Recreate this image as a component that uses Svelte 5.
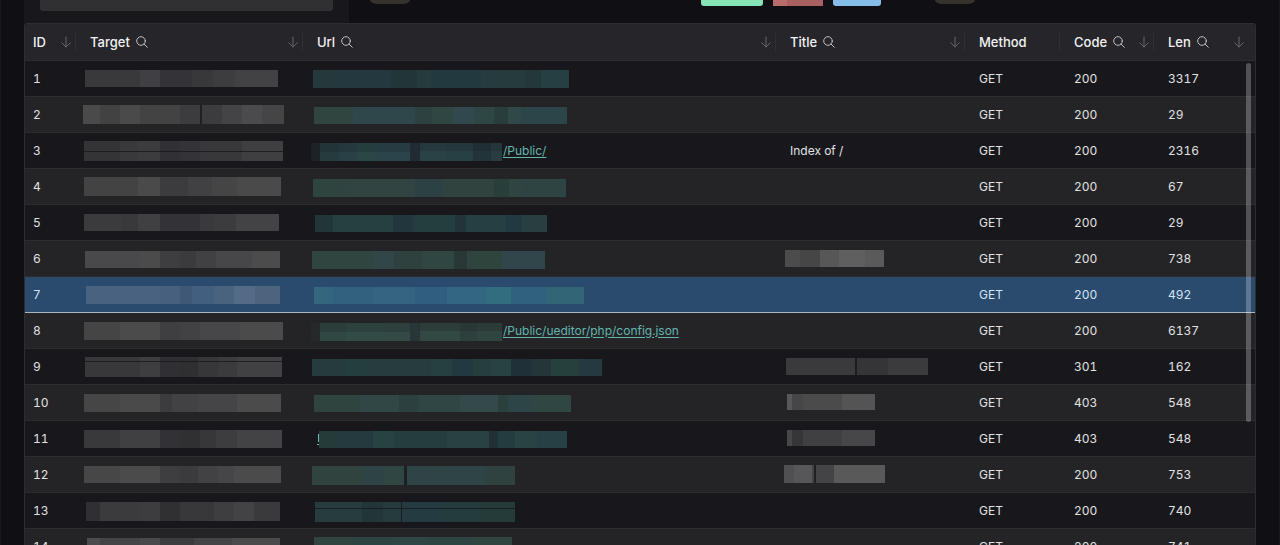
<script lang="ts">
    // a mosaic strip: left, top, height, then [right edge, colour] of each block
    type Strip = { x: number, y: number, h: number, blocks: [number, string][], cuts?: number[][] };

    const columns = [
        { key: "id", label: "ID", search: false, sort: true },
        { key: "target", label: "Target", search: true, sort: true },
        { key: "url", label: "Url", search: true, sort: true },
        { key: "title", label: "Title", search: true, sort: true },
        { key: "method", label: "Method", search: false, sort: false },
        { key: "code", label: "Code", search: true, sort: true },
        { key: "len", label: "Len", search: true, sort: true },
    ];

    const s = (x: number, y: number, h: number, blocks: [number, string][], cuts: number[][] = []): Strip => ({ x, y, h, blocks, cuts });

    const rows: { id: number, target: Strip, url: Strip, link?: string, title?: string, titleStrip?: Strip, code: number, len: number }[] = [
        {
            id: 1, code: 200, len: 3317,
            target: s(3, 9, 17, [[58, "#39393b"], [78, "#404044"], [110, "#343438"], [131, "#38383a"], [153, "#3d3d40"], [196, "#424245"]]),
            url: s(4, 9, 18, [[28, "#25393d"], [82, "#23383f"], [108, "#223639"], [122, "#253b3c"], [172, "#223940"], [216, "#253b3d"], [232, "#243739"], [260, "#263f43"]]),
        },
        {
            id: 2, code: 200, len: 29,
            target: s(1, 8, 19, [[18, "#4a4a4b"], [38, "#424243"], [58, "#4a4a4b"], [98, "#434344"], [140, "#3c3c3e"], [160, "#444446"], [180, "#4b4b4d"], [202, "#454546"]], [[118, 8, 2, 19]]),
            url: s(5, 10, 17, [[44, "#30453f"], [106, "#2f464a"], [123, "#2c4140"], [144, "#304643"], [165, "#31494e"], [185, "#2f4744"], [199, "#293e3c"], [212, "#314946"], [258, "#2c4548"]]),
        },
        {
            id: 3, code: 200, len: 2316, link: "/Public/", title: "Index of /",
            target: s(2, 8, 20, [[38, "#343437"], [56, "#39393c"], [78, "#3c3c3e"], [98, "#303035"], [118, "#343438"], [160, "#38383b"], [201, "#3f3f41"]], [[2, 18, 199, 1]]),
            url: s(2, 10, 18, [[11, "#1d2226"], [30, "#263b3d"], [48, "#294047"], [68, "#2a4745"], [101, "#2b444b"], [111, "#202b34"], [136, "#2a4145"], [164, "#274044"], [182, "#22343a"], [193, "#293d40"]], [[11, 10, 90, 9], [110, 10, 83, 8]]),
        },
        {
            id: 4, code: 200, len: 67,
            target: s(2, 8, 19, [[56, "#434344"], [78, "#4a4a4b"], [106, "#3c3c3e"], [130, "#414143"], [155, "#454546"], [199, "#4a4a4b"]]),
            url: s(4, 10, 18, [[36, "#30443f"], [106, "#314442"], [134, "#2c4143"], [185, "#30433f"], [200, "#283e3b"], [214, "#304441"], [257, "#2d4443"]]),
        },
        {
            id: 5, code: 200, len: 29,
            target: s(2, 9, 17, [[40, "#3b3b3d"], [56, "#39393b"], [78, "#404042"], [118, "#323237"], [132, "#3a3a3c"], [154, "#3c3c3f"], [197, "#434345"]]),
            url: s(6, 10, 17, [[24, "#223538"], [84, "#264040"], [104, "#22363d"], [146, "#243e3f"], [157, "#22343a"], [197, "#253f43"], [213, "#233942"], [238, "#293e41"]]),
        },
        {
            id: 6, code: 200, len: 738,
            target: s(3, 10, 17, [[58, "#49494b"], [78, "#4b4b4c"], [98, "#3e3e40"], [114, "#3b3b3e"], [134, "#414143"], [170, "#47474a"], [198, "#4c4c4d"]]),
            url: s(3, 10, 18, [[64, "#30453f"], [85, "#314747"], [113, "#2e413f"], [145, "#304642"], [158, "#293837"], [193, "#30443e"], [236, "#31464a"]]),
            titleStrip: s(3, 9, 17, [[18, "#4c4c4d"], [38, "#464647"], [57, "#575758"], [83, "#5f5f60"], [102, "#5a5a5b"]]),
        },
        {
            id: 7, code: 200, len: 492,
            target: s(4, 9, 18, [[78, "#49627f"], [98, "#46607d"], [110, "#3f5876"], [132, "#425f80"], [152, "#49627d"], [173, "#536b87"], [198, "#4d647f"]]),
            url: s(5, 10, 17, [[24, "#34677d"], [64, "#31617f"], [106, "#346480"], [138, "#305e81"], [177, "#326681"], [202, "#326c7f"], [238, "#30617f"], [275, "#326677"]]),
        },
        {
            id: 8, code: 200, len: 6137, link: "/Public/ueditor/php/config.json",
            target: s(2, 9, 18, [[38, "#454546"], [78, "#4b4b4c"], [98, "#3f3f41"], [118, "#424244"], [158, "#47474a"], [201, "#4b4b4c"]]),
            url: s(2, 10, 18, [[11, "#252a29"], [38, "#304843"], [75, "#324b47"], [101, "#334a46"], [111, "#283637"], [151, "#324842"], [168, "#2d403d"], [193, "#30453f"]], [[11, 10, 90, 9], [110, 10, 83, 8]]),
        },
        {
            id: 9, code: 301, len: 162,
            target: s(3, 8, 20, [[58, "#38383b"], [78, "#3e3e40"], [98, "#303034"], [116, "#2f2f31"], [136, "#37373a"], [155, "#3b3b3d"], [200, "#414143"]], [[3, 12, 197, 1]]),
            url: s(3, 10, 17, [[38, "#263b3d"], [62, "#243e40"], [122, "#263c3f"], [143, "#263f41"], [164, "#233941"], [182, "#263e3d"], [202, "#274241"], [222, "#203039"], [242, "#25363a"], [270, "#26403d"], [293, "#253a40"]]),
            titleStrip: s(4, 9, 17, [[73, "#3a3a3c"], [106, "#353538"], [146, "#3b3b3e"]], [[73, 9, 2, 17]]),
        },
        {
            id: 10, code: 403, len: 548,
            target: s(2, 9, 18, [[38, "#464647"], [78, "#4a4a4b"], [90, "#3c3c3e"], [116, "#424244"], [155, "#454547"], [199, "#4b4b4c"]]),
            url: s(5, 10, 17, [[51, "#2f443f"], [90, "#304746"], [110, "#2c403f"], [151, "#304644"], [189, "#33494a"], [199, "#2b403d"], [222, "#2d4546"], [262, "#304642"]]),
            titleStrip: s(5, 9, 16, [[10, "#58585a"], [21, "#464648"], [60, "#4b4b4c"], [93, "#545455"]]),
        },
        {
            id: 11, code: 403, len: 548,
            target: s(2, 9, 18, [[38, "#39393c"], [78, "#404042"], [98, "#323236"], [118, "#303032"], [134, "#37373a"], [155, "#3d3d3f"], [200, "#434345"]]),
            url: s(10, 10, 17, [[29, "#253b3a"], [64, "#253a3f"], [85, "#264241"], [138, "#253d3d"], [180, "#294141"], [189, "#223033"], [206, "#243c40"], [228, "#294343"], [258, "#274045"]]),
            titleStrip: s(5, 9, 16, [[10, "#47474a"], [21, "#363638"], [60, "#404042"], [93, "#474749"]]),
        },
        {
            id: 12, code: 200, len: 753,
            target: s(2, 9, 17, [[38, "#474748"], [78, "#4b4b4c"], [98, "#3e3e40"], [116, "#3b3b3d"], [136, "#424244"], [152, "#464648"], [199, "#4b4b4c"]]),
            url: s(3, 9, 19, [[54, "#30433f"], [75, "#2e4346"], [95, "#304643"], [132, "#304445"], [175, "#2e4446"], [206, "#304240"]], [[95, 9, 3, 19]]),
            titleStrip: s(2, 8, 18, [[12, "#505051"], [30, "#57575a"], [52, "#444446"], [103, "#59595a"]], [[32, 8, 2, 18]]),
        },
        {
            id: 13, code: 200, len: 740,
            target: s(4, 9, 19, [[18, "#303032"], [58, "#3b3b3d"], [78, "#3d3d40"], [98, "#303033"], [132, "#38383b"], [152, "#3e3e41"], [172, "#434346"], [198, "#3a3a3d"]]),
            url: s(6, 9, 20, [[53, "#263c3e"], [74, "#22363a"], [92, "#253b3d"], [134, "#243b42"], [169, "#253c3f"], [206, "#253b3a"]], [[6, 15, 200, 1], [92, 9, 1, 20]]),
        },
        {
            id: 14, code: 200, len: 741,
            target: s(5, 9, 19, [[18, "#4c4c4e"], [58, "#444446"], [78, "#49494b"], [112, "#3c3c3e"], [150, "#444446"], [198, "#4b4b4c"]]),
            url: s(5, 8, 19, [[44, "#30453f"], [84, "#2d4444"], [120, "#304646"], [160, "#2d4442"], [203, "#30453f"]]),
        },
    ];

    let selected = $state(7);
</script>

{#snippet mosaic(strip: Strip, width: number)}
    <svg class="mosaic" {width} height="35" aria-hidden="true">
        {#each strip.blocks as [end, fill], i}
            {@const start = i ? strip.blocks[i - 1][0] : strip.x}
            <rect x={start} y={strip.y} width={end - start} height={strip.h} {fill} />
        {/each}
        {#each strip.cuts ?? [] as [x, y, w, h]}
            <rect {x} {y} width={w} height={h} fill="#18181c" opacity={h > 2 && w > 3 ? 0.2 : 0.8} />
        {/each}
        {#if strip.x === 10}
            <!-- first letter of the address sticks out left of the strip -->
            <path d="M9.500 13V21M8 23.500H10" stroke="#6fbab5" fill="none" />
        {/if}
    </svg>
{/snippet}

<div class="page">
    <div class="toolbar">
        <div class="panel">
            <input type="text" aria-label="Filter" />
        </div>
        <span class="pill first"></span>
        <div class="tags">
            <span class="tag green"></span>
            <span class="tag red"></span>
            <span class="tag blue"></span>
        </div>
        <span class="pill"></span>
    </div>

    <div class="table-wrap">
        <table>
            <colgroup>
                {#each columns as col}
                    <col class="col-{col.key}" />
                {/each}
            </colgroup>
            <thead>
                <tr>
                    {#each columns as col}
                        <th scope="col">
                            <div class="head">
                                <span>{col.label}</span>
                                {#if col.search}
                                    <button class="icon" aria-label="Search {col.label}">
                                        <svg width="12" height="12" viewBox="0 0 12 12" fill="none" stroke="#c0c0c2" stroke-linecap="round">
                                            <circle cx="5" cy="5" r="4.300" />
                                            <path d="M8.100 8.100L11.300 11.300" />
                                        </svg>
                                    </button>
                                {/if}
                                {#if col.sort}
                                    <button class="icon sort" aria-label="Sort by {col.label}">
                                        <svg width="10" height="12" viewBox="0 0 10 12" fill="none" stroke="#66666a" stroke-linecap="round" stroke-linejoin="round">
                                            <path d="M5 1V11M0.800 6.800L5 11L9.200 6.800" />
                                        </svg>
                                    </button>
                                {/if}
                            </div>
                        </th>
                    {/each}
                </tr>
            </thead>
            <tbody>
                {#each rows as row}
                    <tr class:selected={row.id === selected} class:striped={row.id % 2 === 0} onclick={() => selected = row.id}>
                        <td>{row.id}</td>
                        <td class="flush">{@render mosaic(row.target, 206)}</td>
                        <td class="flush">
                            <div class="address">
                                {#if row.link}
                                    {@render mosaic(row.url, 194)}<a href={row.link}>{row.link}</a>
                                {:else}
                                    {@render mosaic(row.url, 300)}
                                {/if}
                            </div>
                        </td>
                        {#if row.titleStrip}
                            <td class="flush">{@render mosaic(row.titleStrip, 160)}</td>
                        {:else}
                            <td>{row.title ?? ""}</td>
                        {/if}
                        <td>GET</td>
                        <td>{row.code}</td>
                        <td>{row.len}</td>
                    </tr>
                {/each}
            </tbody>
        </table>
        <div class="scrollbar"></div>
    </div>
</div>

<style>
    :global(body) {
        background-color: #101014;
    }
    .page {
        box-sizing: border-box;
        height: 100vh;
        padding: 0 23px;
        overflow: hidden;
        display: flex;
        flex-direction: column;
        border: solid #1a1a1d;
        border-width: 0 1px;
        font-family: Inter, "Liberation Sans", sans-serif;
        font-size: 12px;
        font-variant-numeric: tabular-nums;
        color: #e2e2e3;
    }

    .toolbar {
        flex: none;
        height: 23px;
        display: flex;
        align-items: flex-start;
    }
    .panel {
        box-sizing: border-box;
        width: 325px;
        height: 23px;
        padding: 0 16px;
        background-color: #18181c;
    }
    input {
        display: block;
        box-sizing: border-box;
        width: 100%;
        height: 11px;
        padding: 0 8px;
        border: none;
        border-radius: 0 0 3px 3px;
        background-color: #303033;
        color: inherit;
        font: inherit;
    }
    .pill {
        width: 40px;
        height: 4px;
        border-radius: 0 0 8px 8px / 0 0 4px 4px;
        background-color: #37322b;
    }
    .pill.first {
        margin-left: 21px;
    }
    .tags {
        display: flex;
        gap: 10px;
        margin: 0 54px 0 291px;
    }
    .tag {
        width: 48px;
        height: 6px;
        border-radius: 0 0 3px 3px;
    }
    .green {
        width: 62px;
        background-color: #86e3b6;
    }
    .red {
        width: 50px;
        border-radius: 0;
        background: linear-gradient(90deg, #b96c6c 28%, #a96060 28%);
    }
    .blue {
        background-color: #86bde8;
    }

    .table-wrap {
        position: relative;
        flex: 1;
        min-height: 0;
        overflow: hidden;
        border: 1px solid #2d2d30;
        border-bottom: none;
        border-radius: 3px 3px 0 0;
    }
    table {
        width: 100%;
        table-layout: fixed;
        border-collapse: separate;
        border-spacing: 0;
    }
    .col-id {
        width: 57px;
    }
    .col-target {
        width: 227px;
    }
    .col-title {
        width: 189px;
    }
    .col-method,
    .col-len {
        width: 95px;
    }
    .col-code {
        width: 94px;
    }

    th,
    td {
        box-sizing: border-box;
        height: 36px;
        padding: 0 8px;
        border-bottom: 1px solid #2d2d30;
        text-align: left;
        line-height: 18px;
        white-space: nowrap;
    }
    th {
        height: 37px;
        padding-right: 6px;
        background-color: #26262a;
        color: #f2f2f3;
        font-size: 13px;
        font-weight: 500;
    }
    td {
        background-color: #18181c;
    }
    .striped td {
        background-color: #242427;
    }
    .selected td {
        background-color: #2a4a6e;
        border-bottom-color: #aab4c0;
        color: #d3e4f5;
    }
    td.flush {
        padding: 0;
    }

    .head {
        display: flex;
        align-items: center;
        gap: 6px;
        height: 18px;
        border-right: 1px solid #303034;
    }
    th:last-child .head {
        border-right-color: transparent;
    }
    .icon {
        display: flex;
        padding: 0;
        border: none;
        background: none;
        cursor: pointer;
    }
    .sort {
        margin-left: auto;
        margin-right: 4px;
    }

    .mosaic {
        display: block;
        flex: none;
    }
    .address {
        display: flex;
        align-items: center;
        height: 35px;
    }
    a {
        color: #63b5ae;
        text-decoration: underline;
        text-underline-offset: 2px;
    }

    .scrollbar {
        position: absolute;
        top: 39px;
        right: 4px;
        width: 5px;
        height: 69%;
        border-radius: 3px;
        background-color: rgba(255, 255, 255, 0.25);
    }
</style>
